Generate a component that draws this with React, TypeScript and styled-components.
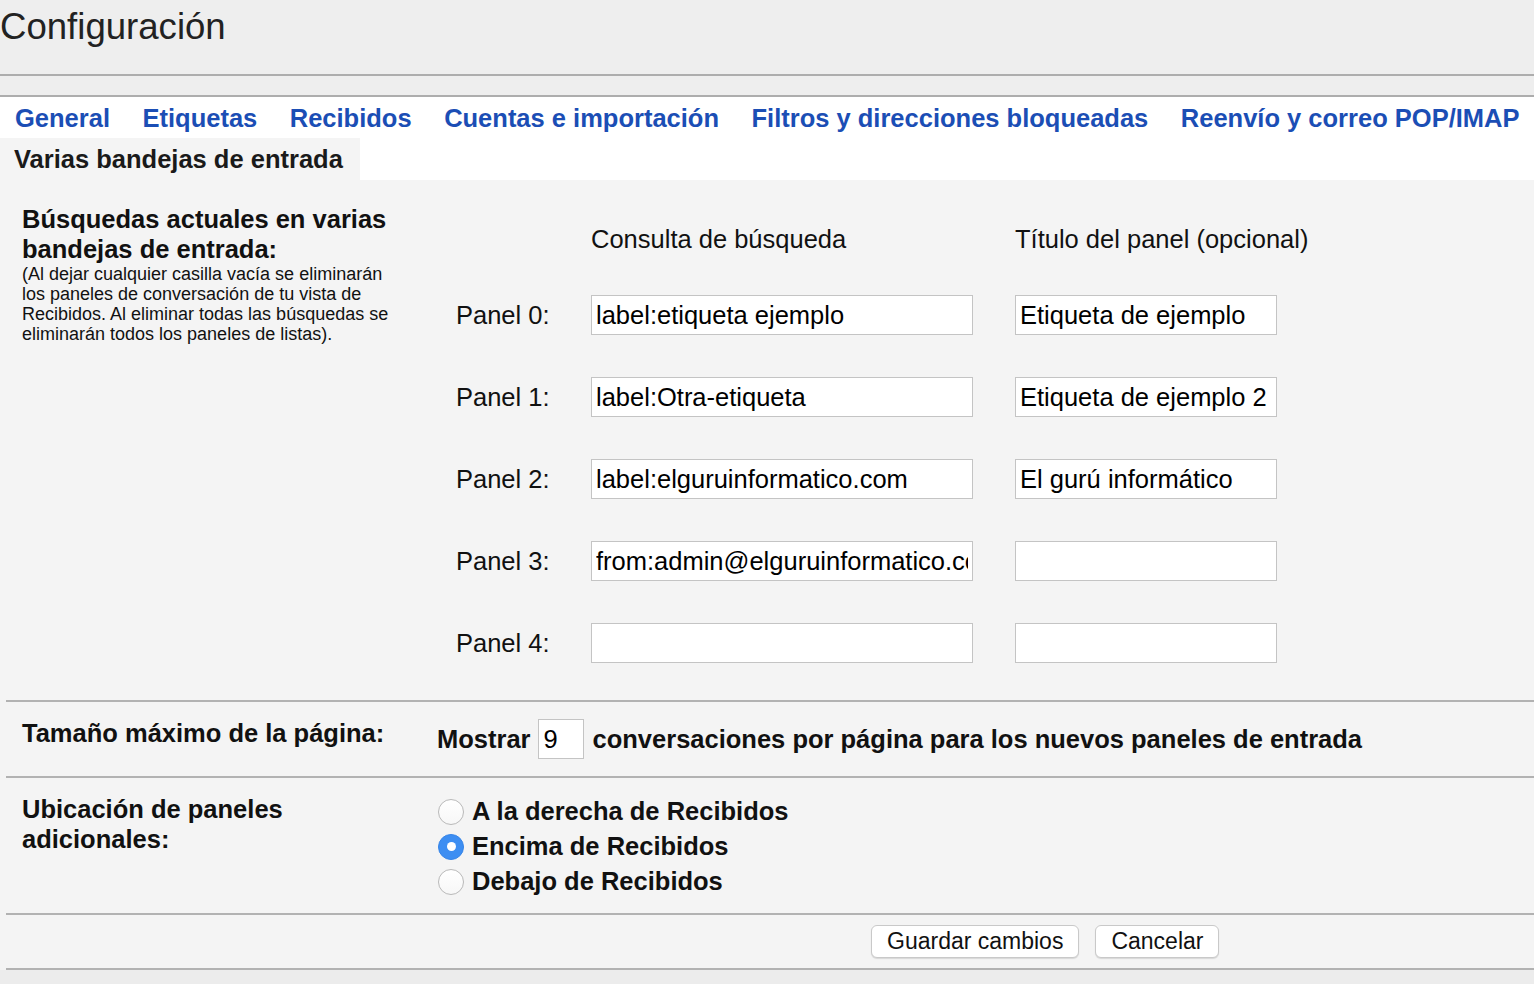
import React from "react";
import styled, { createGlobalStyle } from "styled-components";

const GlobalStyle = createGlobalStyle`
  html, body {
    margin: 0;
    padding: 0;
    background: #ececec;
  }
  body {
    font-family: "Liberation Sans", Arial, Helvetica, sans-serif;
    color: #000;
  }
  * { box-sizing: border-box; }
`;

const Page = styled.div`
  width: 1534px;
  min-height: 984px;
  background: #ececec;
  overflow: hidden;
`;

const Header = styled.header`
  height: 76px;
  padding-top: 7px;
  background: #eeeeee;
  border-bottom: 2px solid #adadad;
`;

const Title = styled.h1`
  margin: 0;
  font-size: 36.6px;
  line-height: 40px;
  font-weight: 400;
  color: #222;
`;

const Band = styled.div`
  height: 21px;
  background: #eeeeee;
  border-bottom: 2px solid #adadad;
`;

const TabArea = styled.nav`
  background: #fff;
`;

const TabRow = styled.div`
  display: flex;
  gap: 32.5px;
  padding-left: 15px;
  height: 41px;
  align-items: center;
`;

const TabLink = styled.a`
  font-size: 25.5px;
  font-weight: 700;
  line-height: 40px;
  color: #1b4eb5;
  text-decoration: none;
  white-space: nowrap;
  cursor: pointer;
`;

const SelectedTab = styled.div`
  display: inline-block;
  height: 42px;
  line-height: 42px;
  padding: 0 17px 0 14px;
  background: #f4f4f4;
  font-size: 25.5px;
  font-weight: 700;
  color: #1a1a1a;
`;

const Content = styled.main`
  background: #f4f4f4;
`;

const Section = styled.section<{ $top: number; $bottom: number; $first?: boolean; $last?: boolean }>`
  margin-left: 6px;
  padding: ${(p) => p.$top}px 0 ${(p) => p.$bottom}px 16px;
  display: grid;
  grid-template-columns: 415px 1fr;
  align-items: start;
  border-top: ${(p) => (p.$first ? "none" : "2px solid #b2b2b2")};
  border-bottom: ${(p) => (p.$last ? "2px solid #b2b2b2" : "none")};
`;

const Heading = styled.div`
  font-size: 25.5px;
  font-weight: 700;
  line-height: 30px;
  color: #111;
`;

const Note = styled.div`
  width: 385px;
  font-size: 18px;
  line-height: 20px;
  color: #111;
`;

const PanelGrid = styled.div`
  margin-top: 20px;
  padding-left: 19px;
  display: grid;
  grid-template-columns: 93px 382px 262px;
  column-gap: 42px;
  row-gap: 42px;
  align-items: center;
`;

const ColHeader = styled.div`
  font-size: 25.5px;
  line-height: 30px;
  margin-bottom: -1px;
  color: #111;
  white-space: nowrap;
`;

const PanelLabel = styled.div`
  font-size: 25.5px;
  line-height: 30px;
  color: #111;
  white-space: nowrap;
`;

const TextInput = styled.input<{ $w?: number }>`
  width: ${(p) => (p.$w ? `${p.$w}px` : "100%")};
  height: 40px;
  margin: 0;
  padding: 0 4px;
  background: #fff;
  border: 1px solid #c4c4c4;
  border-radius: 0;
  font-family: "Liberation Sans", Arial, Helvetica, sans-serif;
  font-size: 25.5px;
  color: #000;
  outline: none;
`;

const InlineRow = styled.div`
  display: flex;
  align-items: center;
  margin-top: 1px;
  font-size: 25.5px;
  font-weight: 700;
  color: #111;
  white-space: nowrap;
`;

const SmallInput = styled(TextInput)`
  margin: 0 9px 0 7px;
  padding: 0 5px;
`;

const RadioList = styled.div`
  display: flex;
  flex-direction: column;
`;

const RadioRow = styled.label`
  display: flex;
  align-items: center;
  height: 35px;
  gap: 8px;
  padding-left: 1px;
  font-size: 25.5px;
  font-weight: 700;
  color: #111;
  cursor: pointer;
`;

const RadioCircle = styled.span<{ $checked?: boolean }>`
  width: 26px;
  height: 26px;
  border-radius: 50%;
  flex: none;
  display: flex;
  align-items: center;
  justify-content: center;
  background: ${(p) => (p.$checked ? "#3d8ef2" : "linear-gradient(#ffffff, #f7f7f7)")};
  border: 1px solid ${(p) => (p.$checked ? "#3584e8" : "#b9b9b9")};
  &::after {
    content: "";
    display: ${(p) => (p.$checked ? "block" : "none")};
    width: 9px;
    height: 9px;
    border-radius: 50%;
    background: #fff;
  }
`;

const ButtonRow = styled.div`
  grid-column: 2;
  display: flex;
  gap: 16px;
  padding-left: 434px;
`;

const Button = styled.button`
  height: 33px;
  padding: 0 15px;
  background: #fff;
  border: 1px solid #c9c9c9;
  border-radius: 6px;
  box-shadow: 0 1px 1px rgba(0, 0, 0, 0.12);
  font-family: "Liberation Sans", Arial, Helvetica, sans-serif;
  font-size: 23px;
  color: #111;
  cursor: pointer;
`;

const tabs = [
  "General",
  "Etiquetas",
  "Recibidos",
  "Cuentas e importación",
  "Filtros y direcciones bloqueadas",
  "Reenvío y correo POP/IMAP",
];

const panels = [
  { query: "label:etiqueta ejemplo", title: "Etiqueta de ejemplo" },
  { query: "label:Otra-etiqueta", title: "Etiqueta de ejemplo 2" },
  { query: "label:elguruinformatico.com", title: "El gurú informático" },
  { query: "from:admin@elguruinformatico.com", title: "" },
  { query: "", title: "" },
];

const placements = [
  { label: "A la derecha de Recibidos", checked: false },
  { label: "Encima de Recibidos", checked: true },
  { label: "Debajo de Recibidos", checked: false },
];

export default function App() {
  return (
    <Page>
      <GlobalStyle />
      <Header>
        <Title>Configuración</Title>
      </Header>
      <Band />
      <TabArea>
        <TabRow>
          {tabs.map((t) => (
            <TabLink key={t}>{t}</TabLink>
          ))}
        </TabRow>
        <SelectedTab>Varias bandejas de entrada</SelectedTab>
      </TabArea>
      <Content>
        <Section $top={24} $bottom={37} $first>
          <div>
            <Heading>Búsquedas actuales en varias bandejas de entrada:</Heading>
            <Note>
              (Al dejar cualquier casilla vacía se eliminarán los paneles de conversación de tu vista de
              Recibidos. Al eliminar todas las búsquedas se eliminarán todos los paneles de listas).
            </Note>
          </div>
          <PanelGrid>
            <span />
            <ColHeader>Consulta de búsqueda</ColHeader>
            <ColHeader>Título del panel (opcional)</ColHeader>
            {panels.map((p, i) => (
              <React.Fragment key={i}>
                <PanelLabel>Panel {i}:</PanelLabel>
                <TextInput readOnly value={p.query} />
                <TextInput readOnly value={p.title} />
              </React.Fragment>
            ))}
          </PanelGrid>
        </Section>
        <Section $top={16} $bottom={17}>
          <Heading>Tamaño máximo de la página:</Heading>
          <InlineRow>
            Mostrar
            <SmallInput $w={46} readOnly value="9" />
            conversaciones por página para los nuevos paneles de entrada
          </InlineRow>
        </Section>
        <Section $top={16} $bottom={14}>
          <Heading>
            Ubicación de paneles
            <br />
            adicionales:
          </Heading>
          <RadioList>
            {placements.map((r) => (
              <RadioRow key={r.label}>
                <RadioCircle $checked={r.checked} />
                {r.label}
              </RadioRow>
            ))}
          </RadioList>
        </Section>
        <Section $top={10} $bottom={10} $last>
          <ButtonRow>
            <Button>Guardar cambios</Button>
            <Button>Cancelar</Button>
          </ButtonRow>
        </Section>
      </Content>
    </Page>
  );
}
